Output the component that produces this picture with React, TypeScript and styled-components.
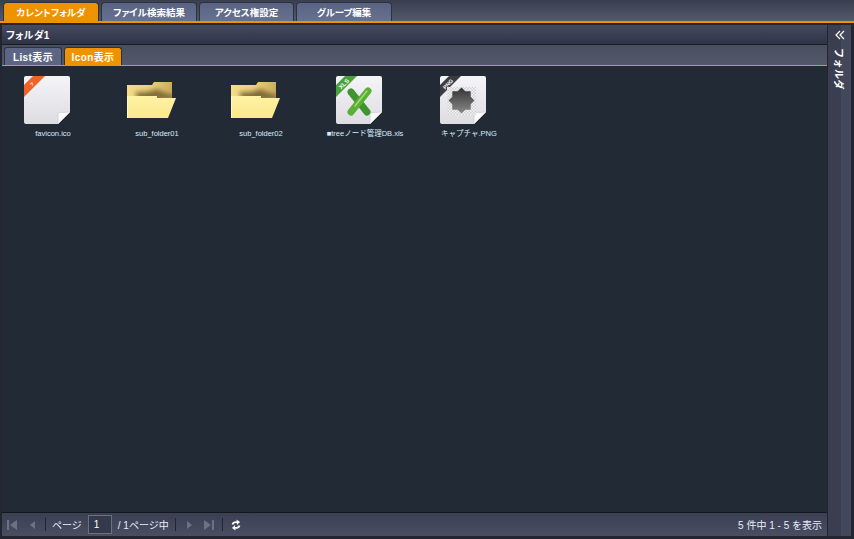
import type { ReactNode } from "react";
import styled, { createGlobalStyle } from "styled-components";

const GlobalStyle = createGlobalStyle`
  html, body { margin: 0; padding: 0; background: #23262e; }
  body { font-family: "Liberation Sans", "Noto Sans CJK JP", sans-serif; }
`;

const mainTabs = ["カレントフォルダ", "ファイル検索結果", "アクセス権設定", "グループ編集"];
const mainTabWidths = [96, 96, 95, 96];
const viewTabs = ["List表示", "Icon表示"];

function DocIcon({ band, label, labelSize, children }: { band: string; label: string; labelSize: number; children?: ReactNode }) {
  return (
    <svg width="46" height="48" viewBox="0 0 46 48">
      <defs>
        <linearGradient id={`page${label}`} x1="0" y1="0" x2="0" y2="1">
          <stop offset="0" stopColor="#f5f5f8" />
          <stop offset="1" stopColor="#dddde2" />
        </linearGradient>
      </defs>
      <path d="M2 0H44a2 2 0 0 1 2 2V36L34 48H2a2 2 0 0 1-2-2V2a2 2 0 0 1 2-2z" fill={`url(#page${label})`} />
      <path d="M34 48V39a2 2 0 0 1 2-2.500L46 36z" fill="#fafafa" stroke="#c4c4c8" strokeWidth="0.6" />
      <path d="M0 9V21L21 0H9z" fill={band} />
      <text x="8" y="10" textAnchor="middle" fontSize={labelSize} fontWeight="bold" fill="#fff" transform="rotate(-45 8 8)" fontFamily="Liberation Sans">{label}</text>
      {children}
    </svg>
  );
}

function FolderIcon({ id }: { id: string }) {
  return (
    <svg width="50" height="37" viewBox="0 0 50 37">
      <defs>
        <linearGradient id={`back${id}`} x1="0" y1="0" x2="1" y2="0">
          <stop offset="0" stopColor="#f4dd8a" />
          <stop offset="0.55" stopColor="#ecd27e" />
          <stop offset="1" stopColor="#c9ab5e" />
        </linearGradient>
        <linearGradient id={`front${id}`} x1="0" y1="0" x2="0" y2="1">
          <stop offset="0" stopColor="#fff2a4" />
          <stop offset="1" stopColor="#fbe88e" />
        </linearGradient>
        <filter id={`soft${id}`} x="-30%" y="-80%" width="160%" height="260%">
          <feGaussianBlur stdDeviation="2.500" />
        </filter>
        <clipPath id={`clip${id}`}>
          <path d="M1 3H26L28 0H46V16H1z" />
        </clipPath>
      </defs>
      <path d="M1 3H26L28 0H46V16H1z" fill={`url(#back${id})`} />
      <g clipPath={`url(#clip${id})`}>
        <path d="M9 10C18 11 26 9 30 7C36 9 40 12 48 13V18H12z" fill="#7f6a34" filter={`url(#soft${id})`} />
      </g>
      <path d="M1 14H31V16H50L42 36H1z" fill={`url(#front${id})`} />
      <path d="M1 14H2V36H1z" fill="#fff8c8" />
    </svg>
  );
}

function ExcelMark() {
  return (
    <g strokeLinecap="round" fill="none">
      <path d="M15 16L31 36" stroke="#3f9430" strokeWidth="7" />
      <path d="M32 15L15 36" stroke="#5bae38" strokeWidth="7" />
      <path d="M31 15L19 30" stroke="#a6da72" strokeWidth="1.500" />
    </g>
  );
}

function PngMark({ id }: { id: string }) {
  const points = Array.from({ length: 16 }, (_, i) => {
    const r = i % 2 === 0 ? 13 : 10;
    const a = (i * Math.PI) / 8 - Math.PI / 2;
    return `${21.5 + r * Math.cos(a)},${24.5 + r * Math.sin(a)}`;
  }).join(" ");
  return (
    <g>
      <defs>
        <pattern id={`check${id}`} width="3" height="3" patternUnits="userSpaceOnUse">
          <rect width="3" height="3" fill="#f4f4f4" />
          <rect width="1.500" height="1.500" fill="#d0d0d0" />
          <rect x="1.500" y="1.500" width="1.500" height="1.500" fill="#d0d0d0" />
        </pattern>
        <linearGradient id={`star${id}`} x1="0" y1="0" x2="0" y2="1">
          <stop offset="0" stopColor="#333" />
          <stop offset="1" stopColor="#8a8a8a" />
        </linearGradient>
      </defs>
      <rect x="7" y="11" width="29" height="28" fill={`url(#check${id})`} />
      <polygon points={points} fill={`url(#star${id})`} />
    </g>
  );
}

const files = [
  { name: "favicon.ico", kind: "ico" },
  { name: "sub_folder01", kind: "folder" },
  { name: "sub_folder02", kind: "folder" },
  { name: "■treeノード管理DB.xls", kind: "xls" },
  { name: "キャプチャ.PNG", kind: "png" },
];

function FileGlyph({ kind, name }: { kind: string; name: string }) {
  if (kind === "folder") return <FolderIcon id={name.slice(-2)} />;
  if (kind === "xls") return <DocIcon band="#4aa23c" label="XLS" labelSize={6}><ExcelMark /></DocIcon>;
  if (kind === "png") return <DocIcon band="#3c3c40" label="PNG" labelSize={5.5}><PngMark id="png" /></DocIcon>;
  return <DocIcon band="#ee6428" label="?" labelSize={5} />;
}

const PagerIcon = ({ d }: { d: string }) => (
  <PagerButton $off>
    <svg width="12" height="12" viewBox="0 0 12 12"><path d={d} fill="currentColor" /></svg>
  </PagerButton>
);

export default function App() {
  return (
    <>
      <GlobalStyle />
      <Page>
        <TabBar>
          {mainTabs.map((tab, i) => (
            <MainTab key={tab} $active={i === 0} $width={mainTabWidths[i]}>{tab}</MainTab>
          ))}
        </TabBar>
        <OrangeRule />
        <Body>
          <MainPanel>
            <PanelTitle>フォルダ1</PanelTitle>
            <ViewTabs>
              {viewTabs.map((tab, i) => (
                <ViewTab key={tab} $active={i === 1}>{tab}</ViewTab>
              ))}
            </ViewTabs>
            <Content>
              {files.map((file) => (
                <FileItem key={file.name}>
                  <IconSlot><FileGlyph kind={file.kind} name={file.name} /></IconSlot>
                  <FileName>{file.name}</FileName>
                </FileItem>
              ))}
            </Content>
            <Pager>
              <PagerIcon d="M1 1H3V11H1zM11 1V11L4 6z" />
              <PagerIcon d="M9 2V10L4 6z" />
              <Separator />
              <PagerLabel>ページ</PagerLabel>
              <PageInput>1</PageInput>
              <PagerLabel>/ 1ページ中</PagerLabel>
              <Separator />
              <PagerIcon d="M4 2V10L9 6z" />
              <PagerIcon d="M1 1V11L8 6zM9 1H11V11H9z" />
              <Separator />
              <PagerButton>
                <svg width="12" height="12" viewBox="0 0 12 12">
                  <path d="M2.500 5.500C3 3.500 5.500 2.500 7.500 3.500" fill="none" stroke="#fff" strokeWidth="1.800" />
                  <path d="M6.500 0.500L10 3L7 6z" fill="#fff" />
                  <path d="M9.500 6.500C9 8.500 6.500 9.500 4.500 8.500" fill="none" stroke="#fff" strokeWidth="1.800" />
                  <path d="M5.500 11.500L2 9L5 6z" fill="#fff" />
                </svg>
              </PagerButton>
              <PagerInfo>5 件中 1 - 5 を表示</PagerInfo>
            </Pager>
          </MainPanel>
          <SidePanel>
            <svg width="12" height="10" viewBox="0 0 12 10"><path d="M6 1L2 5l4 4M10 1L6 5l4 4" fill="none" stroke="#fff" strokeWidth="1.200" /></svg>
            <SideLabel>フォルダ</SideLabel>
          </SidePanel>
        </Body>
      </Page>
    </>
  );
}

const Page = styled.div`
  width: 854px;
  height: 539px;
  display: flex;
  flex-direction: column;
  overflow: hidden;
  background: #23262e;
`;

const TabBar = styled.div`
  height: 21px;
  display: flex;
  align-items: flex-end;
  gap: 2px;
  padding-left: 3px;
  background: linear-gradient(#3a3f50, #53586a);
`;

const MainTab = styled.div<{ $active: boolean; $width: number }>`
  width: ${(p) => p.$width}px;
  height: 19px;
  display: flex;
  align-items: center;
  justify-content: center;
  box-sizing: border-box;
  border: 1px solid #2d3140;
  border-bottom: 0;
  border-radius: 4px 4px 0 0;
  font-size: 9.500px;
  font-weight: bold;
  font-feature-settings: "palt";
  color: #fff;
  background: ${(p) => (p.$active ? "#ef9200" : "linear-gradient(#5a6482, #667190)")};
`;

const OrangeRule = styled.div`
  height: 2px;
  background: #ef9200;
`;

const Body = styled.div`
  flex: 1;
  display: flex;
  gap: 1px;
  padding: 2px 3px 3px 2px;
`;

const MainPanel = styled.div`
  flex: 1;
  display: flex;
  flex-direction: column;
  min-width: 0;
  background: #222b35;
`;

const PanelTitle = styled.div`
  height: 20px;
  box-sizing: border-box;
  padding: 2px 0 0 4px;
  font-size: 10px;
  font-weight: bold;
  font-feature-settings: "palt";
  letter-spacing: 0.3px;
  color: #fff;
  background: linear-gradient(#454a60, #2f3346);
  border-bottom: 1px solid #1b1d24;
`;

const ViewTabs = styled.div`
  height: 21px;
  box-sizing: border-box;
  display: flex;
  align-items: flex-end;
  gap: 2px;
  padding-left: 2px;
  background: linear-gradient(#4a4f60, #53586a);
  border-bottom: 1px solid #ef9200;
`;

const ViewTab = styled.div<{ $active: boolean }>`
  width: 58px;
  height: 18px;
  display: flex;
  align-items: center;
  justify-content: center;
  box-sizing: border-box;
  border: 1px solid #2d3140;
  border-bottom: 0;
  border-radius: 3px 3px 0 0;
  font-size: 10px;
  font-weight: bold;
  letter-spacing: 0.4px;
  color: #fff;
  background: ${(p) => (p.$active ? "#ef9200" : "#5c6684")};
`;

const Content = styled.div`
  flex: 1;
  display: flex;
  align-items: flex-start;
  gap: 14px;
  padding-top: 10px;
  background: #222b35;
`;

const FileItem = styled.div`
  width: 90px;
  display: flex;
  flex-direction: column;
  align-items: center;
`;

const IconSlot = styled.div`
  height: 48px;
  display: flex;
  align-items: center;
  justify-content: center;
`;

const FileName = styled.div`
  margin: 5px 0 0 12px;
  height: 10px;
  line-height: 10px;
  font-size: 7.500px;
  color: #d8ecff;
  white-space: nowrap;
`;

const Pager = styled.div`
  height: 23px;
  display: flex;
  align-items: center;
  gap: 6px;
  padding: 0 5px 0 3px;
  background: linear-gradient(#3a3f52, #4a4e64);
  border-top: 1px solid #15181e;
`;

const PagerButton = styled.div<{ $off?: boolean }>`
  width: 14px;
  display: flex;
  justify-content: center;
  color: ${(p) => (p.$off ? "#6c7282" : "#fff")};
`;

const Separator = styled.div`
  width: 1px;
  height: 13px;
  background: #23262e;
`;

const PagerLabel = styled.span`
  font-size: 10px;
  color: #e8eefa;
`;

const PageInput = styled.div`
  width: 24px;
  height: 19px;
  box-sizing: border-box;
  padding: 3px 0 0 5px;
  font-size: 10px;
  color: #fff;
  background: #343a4c;
  border: 1px solid #6a7080;
`;

const PagerInfo = styled.span`
  margin-left: auto;
  font-size: 10px;
  color: #e8eefa;
`;

const SidePanel = styled.div`
  width: 23px;
  display: flex;
  flex-direction: column;
  align-items: center;
  gap: 8px;
  padding-top: 5px;
  box-sizing: border-box;
  background: linear-gradient(90deg, #3a3e50 55%, #42475b 55%);
`;

const SideLabel = styled.div`
  writing-mode: vertical-rl;
  text-orientation: sideways;
  font-size: 10px;
  font-weight: bold;
  letter-spacing: 0.5px;
  color: #fff;
`;
